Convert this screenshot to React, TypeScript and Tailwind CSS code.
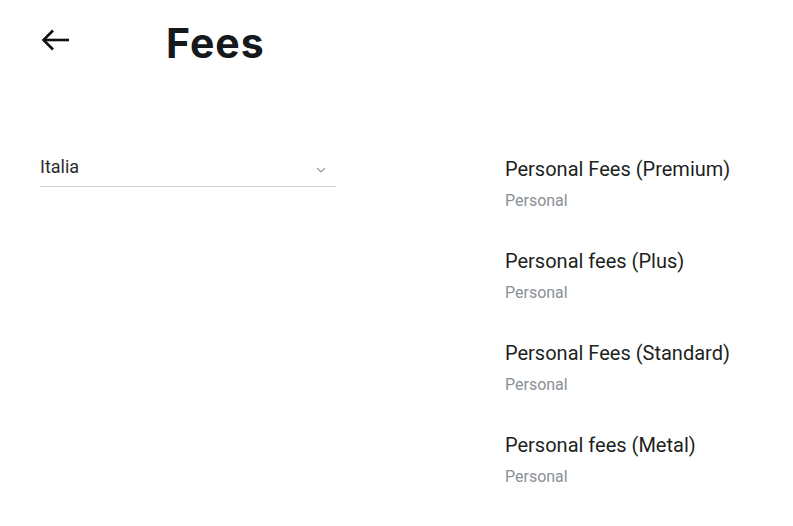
import React from "react";

const items = [
  "Personal Fees (Premium)",
  "Personal fees (Plus)",
  "Personal Fees (Standard)",
  "Personal fees (Metal)",
];

export default function App() {
  return (
    <div className="w-[793px] h-[526px] bg-white overflow-hidden" style={{ fontFamily: "Roboto, 'Liberation Sans', sans-serif" }}>
      <div className="flex items-center h-[48px] mt-[19px]">
        <div className="w-[166px] pl-[40px] flex items-center">
          <svg width="30" height="24" viewBox="0 0 30 24" fill="none" stroke="#111" strokeWidth="2.6" strokeLinecap="butt" strokeLinejoin="miter" className="-mt-[6px]">
            <path d="M29 12H3.5" />
            <path d="M13 2.5L3.5 12L13 21.5" />
          </svg>
        </div>
        <h1 className="text-[41px] leading-[48px] font-bold text-[#16191c] tracking-[1px]" style={{ fontFamily: "Inter, 'Liberation Sans', sans-serif" }}>
          Fees
        </h1>
      </div>
      <div className="flex mt-[88px] pl-[40px]">
        <div className="w-[296px]">
          <div className="flex items-center justify-between border-b border-[#cfcfcf] pb-[9px] h-[32px] pt-[1px]">
            <span className="text-[18px] leading-[22px] text-[#2b2b2b]">Italia</span>
            <svg width="10" height="6" viewBox="0 0 10 6" fill="none" stroke="#9a9a9a" strokeWidth="1.2" className="mr-[10px] mt-[6px]">
              <path d="M1 1l4 4 4-4" />
            </svg>
          </div>
        </div>
        <div className="ml-[169px] flex flex-col">
          {items.map((t) => (
            <div key={t} className="h-[92px]">
              <div className="text-[20px] leading-[24px] text-[#1d1f21] mt-[2px]">{t}</div>
              <div className="text-[16px] leading-[20px] text-[#8a9097] mt-[10px]">Personal</div>
            </div>
          ))}
        </div>
      </div>
    </div>
  );
}
